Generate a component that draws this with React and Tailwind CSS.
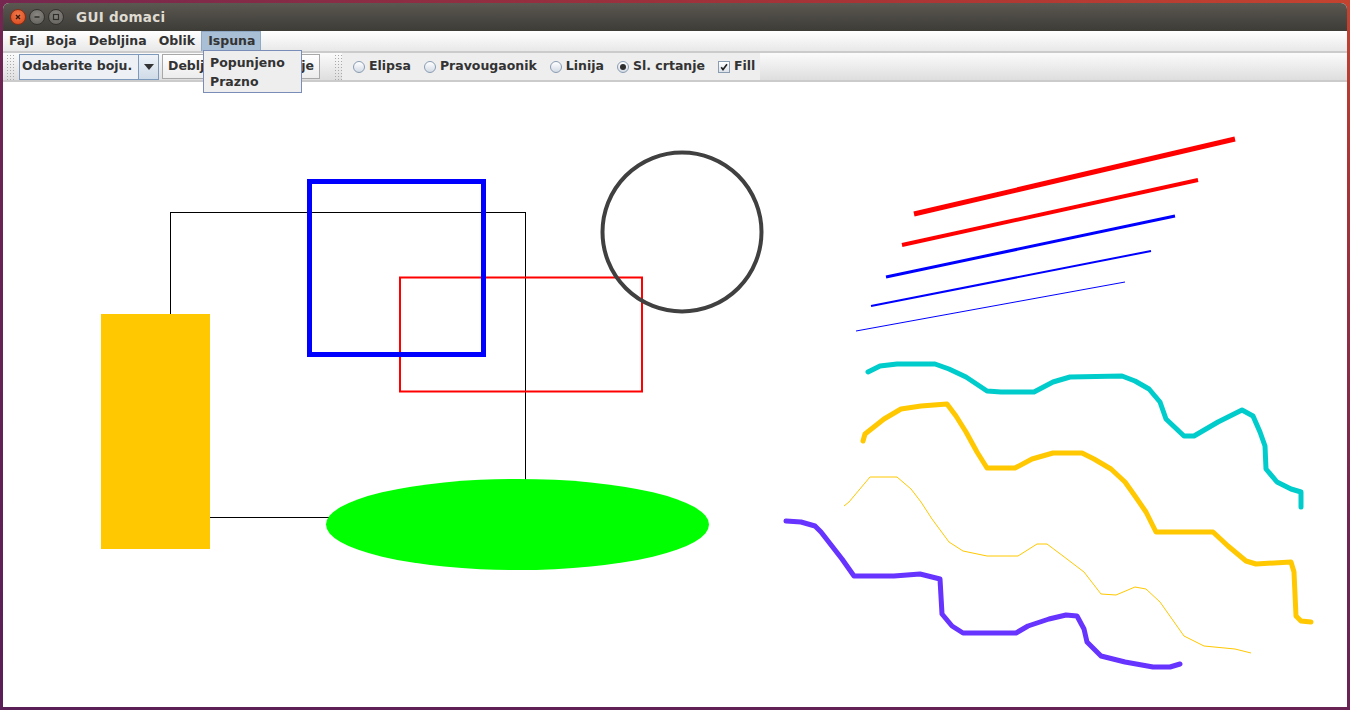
const font = { fontFamily: '"DejaVu Sans", Verdana, sans-serif' };

const cyan = [
  [868, 373], [880, 367], [897, 365], [935, 365], [949, 370], [966, 378], [987, 392], [1001, 393],
  [1034, 393], [1053, 383], [1070, 378], [1122, 377], [1135, 382], [1149, 390], [1160, 403],
  [1166, 420], [1184, 437], [1194, 437], [1218, 423], [1242, 411], [1253, 417], [1260, 433],
  [1265, 447], [1266, 470], [1277, 483], [1291, 490], [1301, 493], [1301, 508],
];

const yellowThick = [
  [863, 442], [865, 435], [884, 420], [901, 410], [921, 407], [947, 405], [956, 417], [966, 433],
  [977, 453], [987, 469], [1015, 469], [1032, 460], [1053, 454], [1082, 454], [1094, 460],
  [1111, 470], [1125, 483], [1135, 497], [1146, 513], [1156, 533], [1213, 533], [1228, 547],
  [1246, 562], [1256, 565], [1291, 563], [1294, 573], [1296, 617], [1301, 622], [1311, 623],
];

const yellowThin = [
  [844, 507], [849, 503], [870, 478], [897, 478], [911, 490], [921, 503], [932, 520], [949, 543],
  [963, 552], [987, 557], [1018, 557], [1037, 545], [1047, 545], [1063, 557], [1084, 573],
  [1101, 595], [1116, 596], [1135, 588], [1146, 590], [1160, 603], [1184, 637], [1204, 647],
  [1235, 650], [1251, 654],
];

const purple = [
  [786, 522], [801, 523], [815, 527], [821, 533], [842, 560], [854, 577], [894, 577], [920, 575],
  [940, 580], [942, 615], [952, 627], [963, 634], [1016, 634], [1028, 627], [1049, 620],
  [1066, 616], [1077, 617], [1084, 630], [1087, 643], [1101, 657], [1125, 663], [1153, 668],
  [1170, 668], [1180, 665],
];

const pts = (a) => a.map((p) => p.join(',')).join(' ');

function Grip({ className }) {
  return (
    <div
      className={`w-[8px] h-[26px] bg-[radial-gradient(circle,#a9a9a9_0.8px,transparent_1px)] bg-[length:3px_3px] ${className}`}
    />
  );
}

function Radio({ label, checked }) {
  return (
    <div className="flex items-center gap-[4px]">
      <div className="w-[12px] h-[12px] rounded-full border border-[#8a9cb2] bg-[linear-gradient(#ffffff,#d3dbe5)] flex items-center justify-center">
        {checked && <div className="w-[6px] h-[6px] rounded-full bg-[#2e2e2e]" />}
      </div>
      <span>{label}</span>
    </div>
  );
}

function TitleButton({ kind }) {
  const close = kind === 'close';
  return (
    <div
      className={`w-[16px] h-[16px] rounded-full flex items-center justify-center border ${
        close
          ? 'bg-[radial-gradient(circle_at_50%_35%,#f07a4a,#d8461c)] border-[#8a2d12]'
          : 'bg-[radial-gradient(circle_at_50%_35%,#8a8782,#5f5d58)] border-[#33322e]'
      }`}
    >
      <svg width="10" height="10" viewBox="0 0 10 10">
        {kind === 'close' && (
          <path d="M3 3 L7 7 M7 3 L3 7" stroke="#3b1a10" strokeWidth="1.4" />
        )}
        {kind === 'min' && <path d="M2.5 5 H7.5" stroke="#2f2e2a" strokeWidth="1.4" />}
        {kind === 'max' && (
          <rect x="2.5" y="2.5" width="5" height="5" fill="none" stroke="#2f2e2a" strokeWidth="1.2" />
        )}
      </svg>
    </div>
  );
}

export default function App() {
  return (
    <div className="w-[1350px] h-[710px] p-[3px] bg-[linear-gradient(20deg,#5a1f57_0%,#6e2553_55%,#a83436_85%,#c4432f_100%)] overflow-hidden">
      <div className="relative h-full flex flex-col rounded-t-[6px] overflow-hidden bg-white" style={font}>
        {/* Title bar */}
        <div className="h-[28px] flex items-center pl-[7px] bg-[linear-gradient(#5b5751,#3d3c37)] shrink-0">
          <div className="flex items-center gap-[3px]">
            <TitleButton kind="close" />
            <TitleButton kind="min" />
            <TitleButton kind="max" />
          </div>
          <span className="ml-[12px] text-[13.5px] font-bold text-[#dfdbd2] tracking-[0.3px]">GUI domaci</span>
        </div>

        {/* Menu bar */}
        <div className="h-[20px] flex items-stretch text-[12.5px] font-bold text-[#333333] bg-[linear-gradient(#ffffff,#e8e8e8)] shrink-0">
          <div className="px-[6px] flex items-center">Fajl</div>
          <div className="px-[6px] flex items-center">Boja</div>
          <div className="px-[6px] flex items-center">Debljina</div>
          <div className="px-[6px] flex items-center">Oblik</div>
          <div className="px-[6px] w-[60px] flex items-center bg-[#a9bfd6] border border-b-0 border-[#90a8c4]">Ispuna</div>
        </div>

        {/* Toolbar */}
        <div className="h-[31px] flex items-center border-t-2 border-b-2 border-t-[#cbcbcb] border-b-[#cbcbcb] bg-[linear-gradient(#fbfbfb,#dedede)] text-[12.5px] font-bold text-[#333333] shrink-0">
          <Grip className="ml-[3px]" />
          <div className="ml-[5px] w-[140px] h-[26px] flex border border-[#7d99bb] bg-[#edf1f6]">
            <div className="flex-1 flex items-center pl-[2px] whitespace-nowrap">Odaberite boju.</div>
            <div className="w-[20px] border-l border-[#7d99bb] bg-[linear-gradient(#eef3f8,#cfdbe8)] flex items-center justify-center">
              <svg width="10" height="6" viewBox="0 0 10 6">
                <path d="M0 0 H10 L5 6 Z" fill="#333" />
              </svg>
            </div>
          </div>
          <div className="ml-[3px] w-[158px] h-[25px] flex items-center justify-between px-[5px] border border-[#a8a8a8] bg-[linear-gradient(#ffffff,#ececec)]">
            <span>Deblj</span>
            <span>je</span>
          </div>
          <Grip className="ml-[14px]" />
          <div className="h-[27px] w-[418px] flex items-center gap-[13px] pl-[11px] bg-[#eeeeee]">
            <Radio label="Elipsa" />
            <Radio label="Pravougaonik" />
            <Radio label="Linija" />
            <Radio label="Sl. crtanje" checked />
            <div className="flex items-center gap-[4px]">
              <div className="w-[12px] h-[12px] border border-[#8a9cb2] bg-[linear-gradient(#ffffff,#dde3ea)] flex items-center justify-center">
                <svg width="8" height="8" viewBox="0 0 8 8">
                  <path d="M1.2 4.2 L3 6.6 L7 1.2" fill="none" stroke="#222" strokeWidth="1.6" />
                </svg>
              </div>
              <span>Fill</span>
            </div>
          </div>
        </div>

        {/* Canvas */}
        <div className="flex-1 bg-white">
          <svg width="1344" height="624" viewBox="3 83 1344 624" className="block">
            <rect x="170.5" y="213.5" width="355" height="305" fill="none" stroke="#000" strokeWidth="1" />
            <rect x="400" y="278.5" width="242" height="114" fill="none" stroke="#ff0000" strokeWidth="2" />
            <rect x="309.5" y="182.5" width="174" height="173" fill="none" stroke="#0000ff" strokeWidth="5" />
            <circle cx="682" cy="233" r="79.5" fill="none" stroke="#404040" strokeWidth="4" />
            <rect x="101" y="315" width="109" height="235" fill="#ffc800" />
            <ellipse cx="517.5" cy="525.5" rx="191.5" ry="45.5" fill="#00ff00" />

            <line x1="914" y1="215" x2="1235" y2="140" stroke="#ff0000" strokeWidth="5" />
            <line x1="902" y1="246" x2="1198" y2="181" stroke="#ff0000" strokeWidth="4" />
            <line x1="886" y1="278" x2="1175" y2="217" stroke="#0000ff" strokeWidth="3" />
            <line x1="871" y1="307" x2="1151" y2="252" stroke="#0000ff" strokeWidth="2" />
            <line x1="856" y1="332" x2="1125" y2="283" stroke="#0000ff" strokeWidth="1" />

            <polyline points={pts(cyan)} fill="none" stroke="#00cccc" strokeWidth="5" strokeLinejoin="round" strokeLinecap="round" />
            <polyline points={pts(yellowThick)} fill="none" stroke="#ffc800" strokeWidth="5" strokeLinejoin="round" strokeLinecap="round" />
            <polyline points={pts(yellowThin)} fill="none" stroke="#ffc800" strokeWidth="1" strokeLinejoin="round" />
            <polyline points={pts(purple)} fill="none" stroke="#6633ff" strokeWidth="5" strokeLinejoin="round" strokeLinecap="round" />
          </svg>
        </div>

        {/* Ispuna popup */}
        <div className="absolute left-[200px] top-[47px] w-[99px] h-[43px] border border-[#7a8db8] bg-[#eeeeee] text-[12.5px] font-bold text-[#333333] flex flex-col justify-center pl-[6px] leading-[19px]">
          <div>Popunjeno</div>
          <div>Prazno</div>
        </div>
      </div>
    </div>
  );
}
